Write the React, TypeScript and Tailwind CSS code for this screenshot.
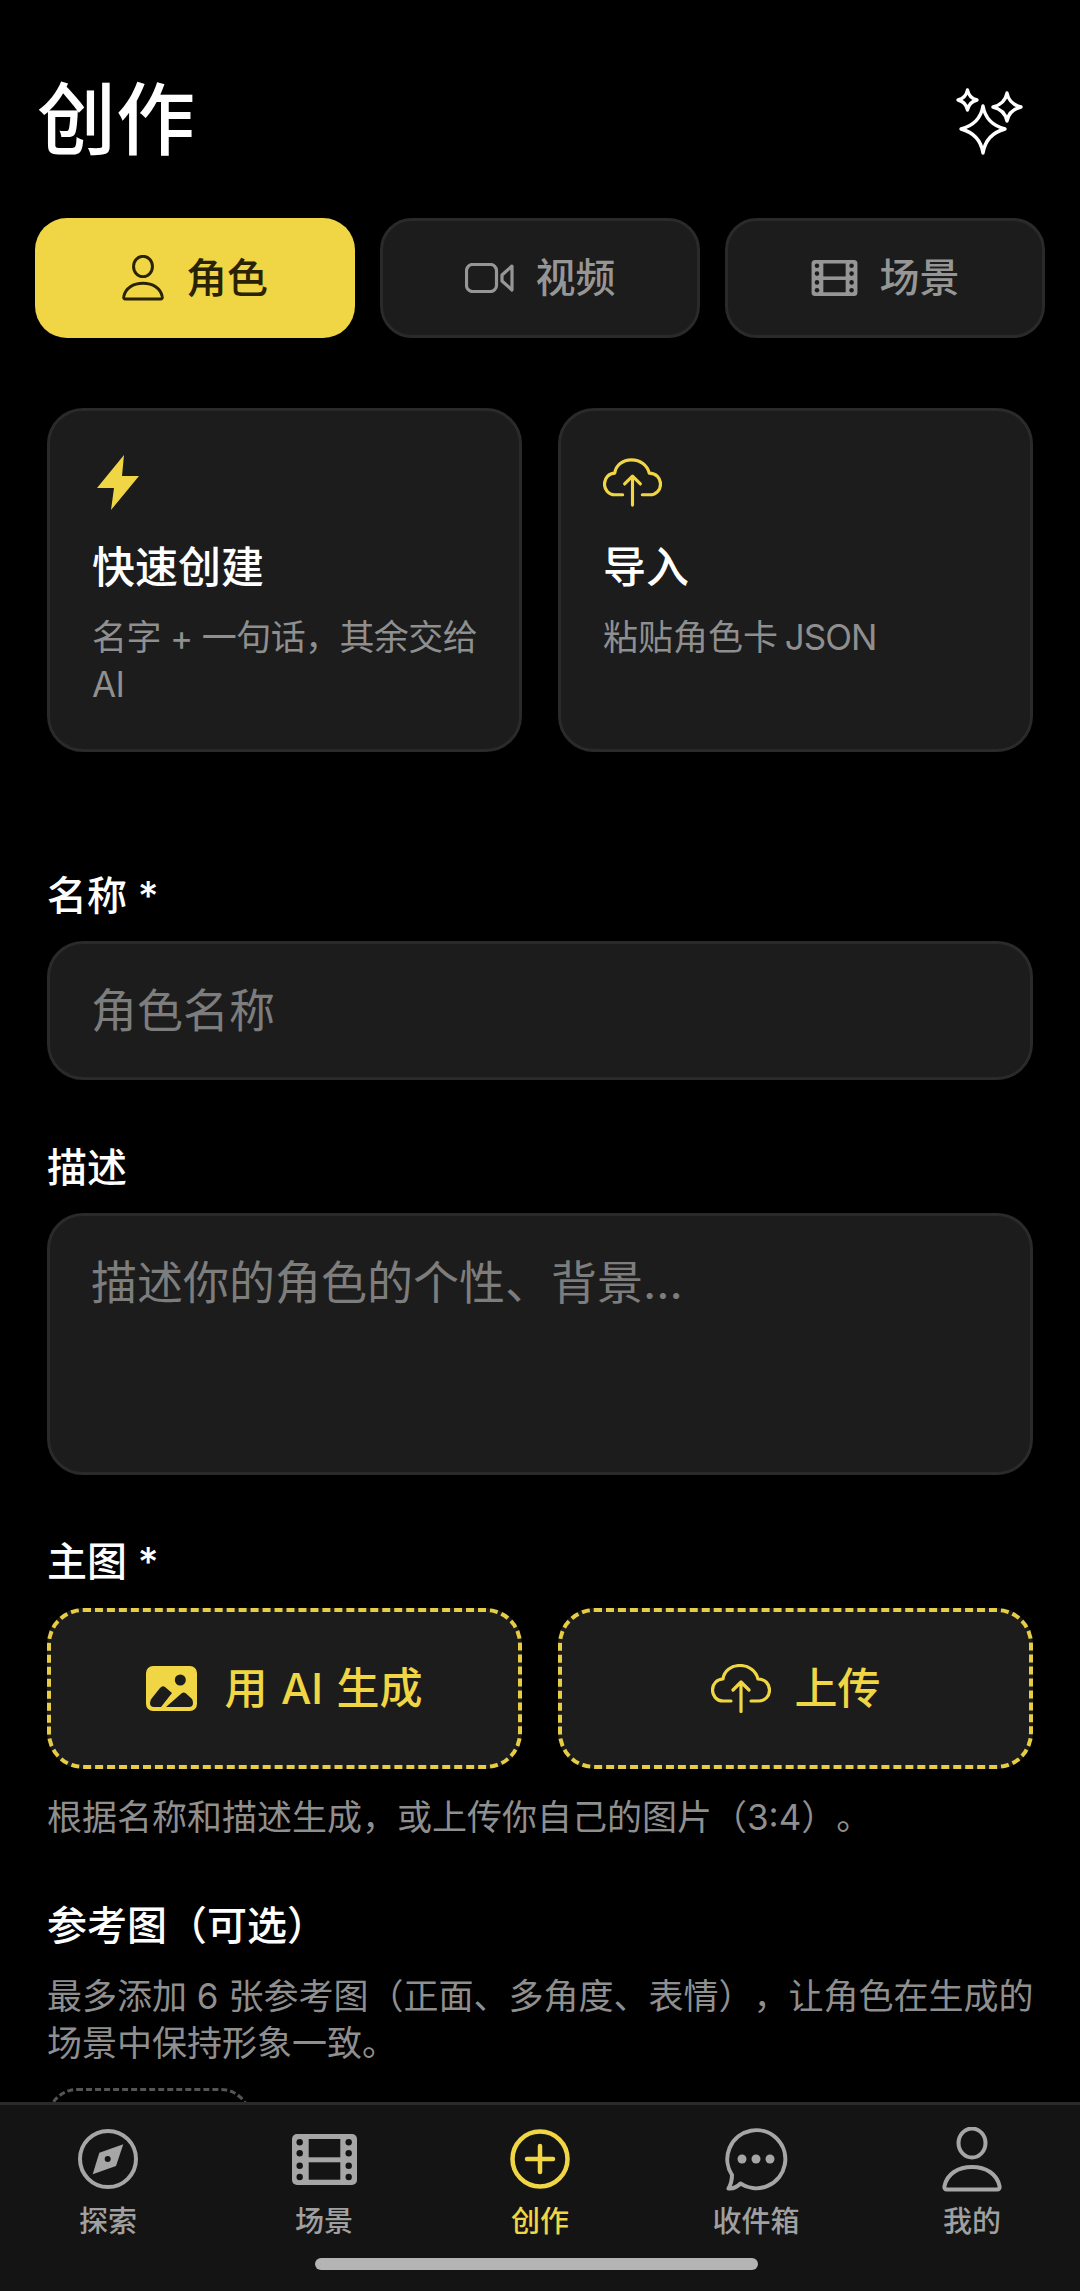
import type { ReactNode } from "react";

const YELLOW = "#f0d544";

// Icons are drawn to match the reference, each one gets its own viewBox in px
const Sparkles = () => (
  <svg width="70" height="70" viewBox="0 0 70 70" fill="none" stroke="#fff" strokeWidth="3.4" strokeLinejoin="round">
    <path d="M28 21 Q31 39 50 44 Q31 49 28 68 Q25 49 6 44 Q25 39 28 21Z" />
    <path d="M12.5 5 Q14 13 22 15 Q14 17 12.5 25 Q11 17 3 15 Q11 13 12.5 5Z" />
    <path d="M52 8 Q54 19 66 22 Q54 25 52 36 Q50 25 38 22 Q50 19 52 8Z" />
  </svg>
);

const Person = ({ w, h, color, sw }: { w: number; h: number; color: string; sw: number }) => (
  <svg width={w} height={h} viewBox="0 0 60 65" fill="none" stroke={color} strokeWidth={sw} strokeLinejoin="round">
    <ellipse cx="30" cy="16" rx="13.5" ry="14.5" />
    <path d="M5 62.5 C3 62.5 2 61 2.5 59 C5 47 16 40 30 40 C44 40 55 47 57.5 59 C58 61 57 62.5 55 62.5Z" />
  </svg>
);

const Video = () => (
  <svg width="49" height="30" viewBox="0 0 49 30" fill="none" stroke="#969696" strokeWidth="3.2" strokeLinejoin="round">
    <rect x="1.5" y="1.5" width="30" height="27" rx="6" />
    <path d="M47 3 L37 12 V18 L47 27Z" />
  </svg>
);

const Film = ({ w, h, color, bg }: { w: number; h: number; color: string; bg: string }) => (
  <svg width={w} height={h} viewBox="0 0 65 51">
    <rect width="65" height="51" rx="5" fill={color} />
    <rect x="16.7" y="5" width="31.6" height="18.3" fill={bg} />
    <rect x="16.7" y="28.3" width="31.6" height="17.4" fill={bg} />
    {[8.3, 19.3, 31.7, 43].map((y) => (
      <g key={y} fill={bg}>
        <circle cx="7.7" cy={y} r="3.2" />
        <circle cx="56.7" cy={y} r="3.2" />
      </g>
    ))}
  </svg>
);

const Bolt = () => (
  <svg width="42" height="55" viewBox="0 0 42 55" fill={YELLOW}>
    <path d="M27 0 L0 33 H17 L14 55 L42 21 H25Z" />
  </svg>
);

const CloudUp = ({ w, h }: { w: number; h: number }) => (
  <svg width={w} height={h} viewBox="0 0 60 49" fill="none" stroke={YELLOW} strokeWidth="3.2" strokeLinecap="round" strokeLinejoin="round">
    <path d="M20 37 H12 C5 37 1.5 31 1.5 26 C1.5 20 6 15 12 15 C13 7 20 1.5 29 1.5 C38 1.5 45 7 47 15 C54 15 58.5 20 58.5 26 C58.5 32 54 37 48 37 H40" />
    <path d="M30 47.5 V19 M22 26 L30 18 L38 26" />
  </svg>
);

const ImageIcon = () => (
  <svg width="51" height="45" viewBox="0 0 51 45">
    <rect width="51" height="45" rx="7" fill={YELLOW} />
    <circle cx="34.3" cy="14" r="5.5" fill="#1c1c1c" />
    <path d="M4 37 Q4 34 6 32 L14 22 Q16.7 19 19 21 L26 27 L15 41 H8 Q4 41 4 37Z" fill="#1c1c1c" />
    <path d="M20 41 L36 27 Q38 26 40 27.5 L46 33 Q47 35 47 37 Q47 41 43 41Z" fill="#1c1c1c" />
  </svg>
);

const Compass = () => (
  <svg width="60" height="60" viewBox="0 0 60 60" fill="none">
    <circle cx="30" cy="30" r="28" stroke="#a6a6a6" strokeWidth="4" />
    <path d="M45.3 15.3 L38 37 L14.7 45.3 L21.3 23.7Z" fill="#a6a6a6" />
    <circle cx="29.7" cy="30" r="3" fill="#141414" />
  </svg>
);

const PlusCircle = () => (
  <svg width="60" height="60" viewBox="0 0 60 60" fill="none" stroke={YELLOW} strokeWidth="4.5" strokeLinecap="round">
    <circle cx="30" cy="30" r="27.5" />
    <path d="M30 17 V43 M17 30 H43" />
  </svg>
);

const Chat = () => (
  <svg width="64" height="64" viewBox="0 0 64 64" fill="none">
    <path
      d="M8 48 C8 53 6.5 58 4.5 61.5 C9 62 13 60 16.5 56.5 A29 29 0 1 0 8 48Z"
      stroke="#a6a6a6"
      strokeWidth="4"
      strokeLinejoin="round"
    />
    <circle cx="18" cy="32" r="4.5" fill="#a6a6a6" />
    <circle cx="32" cy="32" r="4.5" fill="#a6a6a6" />
    <circle cx="46" cy="32" r="4.5" fill="#a6a6a6" />
  </svg>
);

const tabs: { label: string; icon: ReactNode; active?: boolean }[] = [
  { label: "角色", icon: <Person w={42} h={46} color="#2a2205" sw={4.2} />, active: true },
  { label: "视频", icon: <Video /> },
  { label: "场景", icon: <Film w={47} h={36} color="#969696" bg="#1c1c1c" /> },
];

const navItems: { label: string; icon: ReactNode; active?: boolean }[] = [
  { label: "探索", icon: <Compass /> },
  { label: "场景", icon: <Film w={65} h={51} color="#a6a6a6" bg="#141414" /> },
  { label: "创作", icon: <PlusCircle />, active: true },
  { label: "收件箱", icon: <Chat /> },
  { label: "我的", icon: <Person w={60} h={65} color="#a6a6a6" sw={4} /> },
];

export default function App() {
  return (
    <div className="h-[2291px] w-[1080px] overflow-hidden bg-black flex flex-col [text-spacing-trim:space-all] font-['Inter','Noto_Sans_CJK_SC',sans-serif]">
      <main className="flex-1 min-h-0 overflow-hidden">
        <div className="flex items-center justify-between pl-[37px] pr-[55px] pt-[70px] h-[170px]">
          <h1 className="text-[79px] leading-[92px] font-medium text-white">创作</h1>
          <Sparkles />
        </div>

        <div className="mt-[48px] px-[35px] grid grid-cols-3 gap-[25px]">
          {tabs.map((t) => (
            <div
              key={t.label}
              className={
                t.active
                  ? "h-[120px] rounded-[32px] bg-[#f0d544] flex items-center justify-center gap-[22px] text-[#2a2205]"
                  : "h-[120px] rounded-[32px] bg-[#1c1c1c] border-[3px] border-[#2a2a2a] flex items-center justify-center gap-[22px] text-[#969696]"
              }
            >
              {t.icon}
              <span className={t.active ? "text-[41px] leading-none font-medium" : "text-[40px] leading-none font-medium"}>{t.label}</span>
            </div>
          ))}
        </div>

        <div className="px-[47px]">
          <div className="mt-[70px] grid grid-cols-2 gap-[36px]">
            <div className="h-[344px] rounded-[36px] bg-[#1c1c1c] border-[3px] border-[#2a2a2a] pt-[44px] pl-[42px] pr-[30px]">
              <div className="pl-[5px]">
                <Bolt />
              </div>
              <div className="mt-[29px] text-[43px] leading-[56px] font-medium text-white">快速创建</div>
              <div className="mt-[19px] text-[35px] leading-[47px] tracking-[-0.6px] text-[#8f8f8f]">名字 + 一句话，其余交给 AI</div>
            </div>
            <div className="h-[344px] rounded-[36px] bg-[#1c1c1c] border-[3px] border-[#2a2a2a] pt-[47px] pl-[42px] pr-[30px]">
              <CloudUp w={59} h={49} />
              <div className="mt-[32px] text-[43px] leading-[56px] font-medium text-white">导入</div>
              <div className="mt-[19px] text-[35px] leading-[47px] [word-spacing:-3px] text-[#8f8f8f]">粘贴角色卡 <span className="tracking-[-1px]">JSON</span></div>
            </div>
          </div>

          <div className="mt-[120px] text-[40px] leading-[48px] font-medium text-white">名称 *</div>
          <div className="mt-[21px] h-[139px] rounded-[36px] bg-[#1c1c1c] border-[3px] border-[#2a2a2a] flex items-center pl-[41px] text-[46px] text-[#7d7d7d]">
            角色名称
          </div>

          <div className="mt-[64px] text-[40px] leading-[48px] font-medium text-white">描述</div>
          <div className="mt-[21px] h-[262px] rounded-[36px] bg-[#1c1c1c] border-[3px] border-[#2a2a2a] pt-[36px] pl-[41px] text-[46px] leading-[60px] text-[#7d7d7d]">
            描述你的角色的个性、背景...
          </div>

          <div className="mt-[63px] text-[40px] leading-[48px] font-medium text-white">主图 *</div>
          <div className="mt-[22px] grid grid-cols-2 gap-[36px]">
            <div className="h-[161px] rounded-[36px] bg-[#1c1c1c] border-[4px] border-dashed border-[#e6cd45] flex items-center justify-center gap-[27px] text-[#f0d544]">
              <ImageIcon />
              <span className="text-[43px] leading-none font-medium [word-spacing:2px]">用 AI 生成</span>
            </div>
            <div className="h-[161px] rounded-[36px] bg-[#1c1c1c] border-[4px] border-dashed border-[#e6cd45] flex items-center justify-center gap-[24px] text-[#f0d544]">
              <CloudUp w={60} h={49} />
              <span className="text-[43px] leading-none font-medium">上传</span>
            </div>
          </div>
          <div className="mt-[25px] text-[35px] leading-[47px] text-[#8f8f8f]">根据名称和描述生成，或上传你自己的图片（3:4）。</div>

          <div className="mt-[61px] text-[40px] leading-[48px] font-medium text-white">参考图（可选）</div>
          <div className="mt-[23px] -mr-[12px] text-[35px] leading-[47px] text-[#8f8f8f]">
            最多添加 6 张参考图（正面、多角度、表情），让角色在生成的场景中保持形象一致。
          </div>
          <div className="mt-[21px] h-[200px] w-[204px] rounded-[30px] border-[3px] border-dashed border-[#555555]" />
        </div>
      </main>

      <nav className="relative h-[189px] shrink-0 bg-[#141414] border-t-[3px] border-[#2a2a2a]">
        <div className="grid grid-cols-5">
          {navItems.map((n) => (
            <div key={n.label} className="flex flex-col items-center">
              <div className="h-[90px] mt-[9px] flex items-center justify-center">{n.icon}</div>
              <span className={n.active ? "text-[29px] leading-[36px] font-medium text-[#f0d544]" : "text-[29px] leading-[36px] font-medium text-[#a0a0a0]"}>
                {n.label}
              </span>
            </div>
          ))}
        </div>
        <div className="absolute left-[315px] top-[153px] h-[12px] w-[443px] rounded-full bg-[#b4b4b4]" />
      </nav>
    </div>
  );
}
